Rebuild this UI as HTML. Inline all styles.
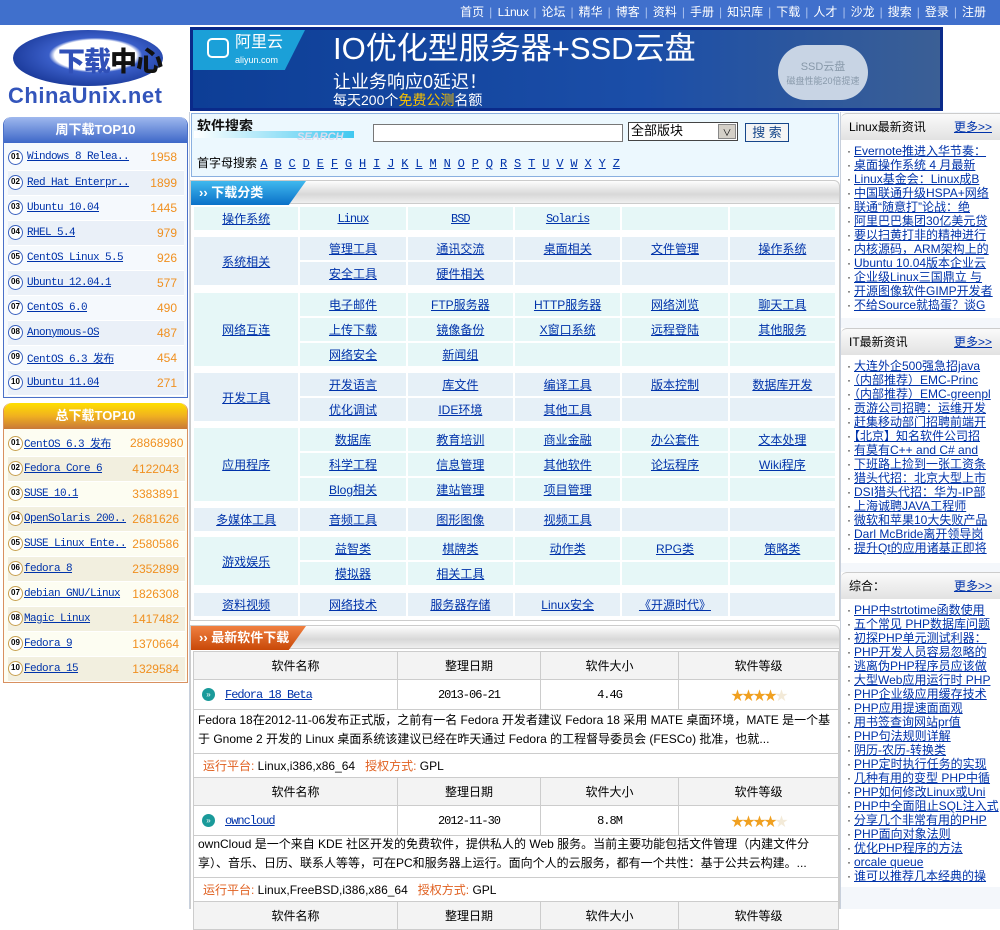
<!DOCTYPE html>
<html><head><meta charset="utf-8">
<style>
*{margin:0;padding:0;box-sizing:border-box}
body{width:1000px;height:909px;overflow:hidden;background:#fff;font:12px "Liberation Sans","Noto Sans CJK SC",sans-serif;color:#000;position:relative}
a{color:#0033aa;text-decoration:underline}
.abs{position:absolute}
#nav{left:0;top:0;width:1000px;height:25px;background:#4070cc;color:#fff;text-align:right;padding-right:10px;line-height:24px;font-size:12px}
#nav span{color:#fff;margin:0 4px}
#nav i{font-style:normal;color:#a8c0ee;margin:0 1px}
.mono{font-family:"Liberation Mono","Noto Sans CJK SC",monospace;letter-spacing:-1px}
.ptitle{color:#fff;font-weight:bold;text-align:center;font-size:13px;line-height:26px;border-radius:8px 8px 0 0}
.lt{table-layout:fixed;font-family:"Liberation Mono","Noto Sans CJK SC",monospace;font-size:11px;letter-spacing:-0.6px}
.lt td{height:25px;border-bottom:1px solid #fff;white-space:nowrap;overflow:hidden}
.lt td.n{font-family:"Liberation Sans",sans-serif;font-size:12px;letter-spacing:0}
.num{display:inline-block;width:15px;height:15px;border:1.5px solid #3a62c0;border-radius:50%;font-size:8px;line-height:12px;text-align:center;font-weight:bold;color:#000;background:#fff;font-family:"Liberation Sans",sans-serif;letter-spacing:0}
.cat{position:absolute;left:192px;width:645px;border-collapse:separate;border-spacing:2px;background:#fff}
.cat td{text-align:center;height:23px;width:105px}
.cat td.l{width:104px}
.c1 td{background:#e6f7f7}
.c2 td{background:#e6f0f7}
.rp{position:absolute;left:841px;width:159px}
.rh{height:27px;background:linear-gradient(#fafafa,#e2e2e2);border-top:1px solid #ccc;border-radius:6px 0 0 0;line-height:27px;padding-left:8px;font-size:12px}
.rh a{position:absolute;right:8px;font-size:12px}
.rl{padding:4px 0 0 6px;line-height:14px;font-size:12px;white-space:nowrap;overflow:hidden}
.rl div:before{content:"·";color:#000;margin-right:3px}
.sec{height:24px;background:linear-gradient(#fdfdfd,#d8d8d8 60%,#efefef);border:1px solid #ccc;border-radius:0 6px 0 0;position:absolute;left:190px;width:650px}
.sech{position:absolute;left:0;top:0;height:24px;width:115px;color:#fff;font-weight:bold;font-size:13px;line-height:23px;padding-left:8px;clip-path:polygon(0 0,100% 0,85% 100%,0 100%)}
.st{position:absolute;left:193px;width:646px;border-collapse:collapse}
.st td{border:1px solid #ccc;text-align:center;font-size:12px}
.st tr.h td{background:#f3f3f3;height:28px}
.desc{position:absolute;left:193px;width:646px;padding:2px 4px;line-height:19px;font-size:12px;border-left:1px solid #ccc;border-right:1px solid #ccc}
.plat{position:absolute;left:193px;width:646px;height:25px;line-height:24px;padding-left:9px;border:1px solid #ccc;font-size:12px}
.plat b{color:#e06020;font-weight:normal}
.let a{display:inline-block;width:14.1px;font-family:"Liberation Mono",monospace;font-size:12px}
</style></head><body>

<div id="nav" class="abs"><span>首页</span><i>|</i><span class="mono">Linux</span><i>|</i><span>论坛</span><i>|</i><span>精华</span><i>|</i><span>博客</span><i>|</i><span>资料</span><i>|</i><span>手册</span><i>|</i><span>知识库</span><i>|</i><span>下载</span><i>|</i><span>人才</span><i>|</i><span>沙龙</span><i>|</i><span>搜索</span><i>|</i><span>登录</span><i>|</i><span>注册</span></div>

<!-- logo -->
<div class="abs" style="left:8px;top:30px;width:172px;height:78px">
 <div class="abs" style="left:5px;top:0;width:150px;height:56px;border-radius:50%;background:radial-gradient(ellipse at 55% 45%,#fff 35%,#3a5ec8 40%,#1b3a9a 75%)"></div>
 <div class="abs" style="left:50px;top:10px;font-size:27px;font-weight:900;letter-spacing:-1px"><span style="color:#3050b8">下载</span><span style="color:#111">中心</span></div>
 <div class="abs" style="left:0;top:53px;font-size:22px;font-weight:900;color:#3355bb;font-family:'Liberation Sans',sans-serif;letter-spacing:0.5px">ChinaUnix.net</div>
</div>

<!-- banner -->
<div class="abs" style="left:190px;top:27px;width:753px;height:84px;background:#0a2a8a;padding:3px">
 <div style="position:relative;width:100%;height:100%;background:linear-gradient(90deg,#0d3e96,#1b4ea8 60%,#3b5f95)">
  <div class="abs" style="left:0;top:0;width:112px;height:40px;background:#1ba0d8;clip-path:polygon(0 0,100% 0,82% 100%,0 100%)"></div>
  <div class="abs" style="left:14px;top:8px;width:22px;height:20px;border:2px solid #fff;border-radius:5px"></div>
  <div class="abs" style="left:42px;top:5px;color:#fff;font-size:16px;line-height:16px">阿里云<br><span style="font-size:9px">aliyun.com</span></div>
  <div class="abs" style="left:140px;top:0;color:#fff;font-size:31px;line-height:38px">IO优化型服务器+SSD云盘</div>
  <div class="abs" style="left:140px;top:38px;color:#fff;font-size:18px">让业务响应0延迟！</div>
  <div class="abs" style="left:140px;top:60px;color:#fff;font-size:14px">每天200个<span style="color:#f5c000">免费公测</span>名额</div>
  <div class="abs" style="left:585px;top:15px;width:90px;height:55px;border-radius:30px;background:#c8d4e4;color:#8899aa;text-align:center;font-size:11px;line-height:14px;padding-top:15px">SSD云盘<br><span style="font-size:9px">磁盘性能20倍提速</span></div>
 </div>
</div>

<!-- weekly top10 -->
<div class="abs" style="left:3px;top:117px;width:185px;height:281px;border:1px solid #4a70c8;border-top:none;border-radius:8px 8px 0 0;background:#f5f9fd">
 <div class="ptitle" style="background:linear-gradient(#9fb8ee,#3d67c8)">周下载TOP10</div>
 <table class="lt" style="margin:2px 0 0 4px;border-collapse:collapse;width:176px">
 <col style="width:19px"><col style="width:112px"><col>
 <tr><td><span class="num">01</span></td><td><a>Windows 8 Relea..</a></td><td class="n" style="color:#f09020;text-align:right;padding-right:7px">1958</td></tr>
 <tr style="background:#eaf0f8"><td><span class="num">02</span></td><td><a>Red Hat Enterpr..</a></td><td class="n" style="color:#f09020;text-align:right;padding-right:7px">1899</td></tr>
 <tr><td><span class="num">03</span></td><td><a>Ubuntu 10.04</a></td><td class="n" style="color:#f09020;text-align:right;padding-right:7px">1445</td></tr>
 <tr style="background:#eaf0f8"><td><span class="num">04</span></td><td><a>RHEL 5.4</a></td><td class="n" style="color:#f09020;text-align:right;padding-right:7px">979</td></tr>
 <tr><td><span class="num">05</span></td><td><a>CentOS Linux 5.5</a></td><td class="n" style="color:#f09020;text-align:right;padding-right:7px">926</td></tr>
 <tr style="background:#eaf0f8"><td><span class="num">06</span></td><td><a>Ubuntu 12.04.1</a></td><td class="n" style="color:#f09020;text-align:right;padding-right:7px">577</td></tr>
 <tr><td><span class="num">07</span></td><td><a>CentOS 6.0</a></td><td class="n" style="color:#f09020;text-align:right;padding-right:7px">490</td></tr>
 <tr style="background:#eaf0f8"><td><span class="num">08</span></td><td><a>Anonymous-OS</a></td><td class="n" style="color:#f09020;text-align:right;padding-right:7px">487</td></tr>
 <tr><td><span class="num">09</span></td><td><a>CentOS 6.3 发布</a></td><td class="n" style="color:#f09020;text-align:right;padding-right:7px">454</td></tr>
 <tr style="background:#eaf0f8"><td><span class="num">10</span></td><td><a>Ubuntu 11.04</a></td><td class="n" style="color:#f09020;text-align:right;padding-right:7px">271</td></tr>
 </table>
</div>

<!-- total top10 -->
<div class="abs" style="left:3px;top:403px;width:185px;height:280px;border:1px solid #d89060;border-top:none;border-radius:8px 8px 0 0;background:#fdfdf2">
 <div class="ptitle" style="background:linear-gradient(#ffe000,#f0b020 50%,#c87838)">总下载TOP10</div>
 <table class="lt" style="margin:2px 0 0 4px;border-collapse:collapse;width:177px">
 <col style="width:16px"><col style="width:106px"><col>
 <tr><td><span class="num" style="border-color:#c8a050">01</span></td><td><a>CentOS 6.3 发布</a></td><td class="n" style="color:#f09020;text-align:right;padding-right:6px">28868980</td></tr>
 <tr style="background:#f2efdf"><td><span class="num" style="border-color:#c8a050">02</span></td><td><a>Fedora Core 6</a></td><td class="n" style="color:#f09020;text-align:right;padding-right:6px">4122043</td></tr>
 <tr><td><span class="num" style="border-color:#c8a050">03</span></td><td><a>SUSE 10.1</a></td><td class="n" style="color:#f09020;text-align:right;padding-right:6px">3383891</td></tr>
 <tr style="background:#f2efdf"><td><span class="num" style="border-color:#c8a050">04</span></td><td><a>OpenSolaris 200..</a></td><td class="n" style="color:#f09020;text-align:right;padding-right:6px">2681626</td></tr>
 <tr><td><span class="num" style="border-color:#c8a050">05</span></td><td><a>SUSE Linux Ente..</a></td><td class="n" style="color:#f09020;text-align:right;padding-right:6px">2580586</td></tr>
 <tr style="background:#f2efdf"><td><span class="num" style="border-color:#c8a050">06</span></td><td><a>fedora 8</a></td><td class="n" style="color:#f09020;text-align:right;padding-right:6px">2352899</td></tr>
 <tr><td><span class="num" style="border-color:#c8a050">07</span></td><td><a>debian GNU/Linux</a></td><td class="n" style="color:#f09020;text-align:right;padding-right:6px">1826308</td></tr>
 <tr style="background:#f2efdf"><td><span class="num" style="border-color:#c8a050">08</span></td><td><a>Magic Linux</a></td><td class="n" style="color:#f09020;text-align:right;padding-right:6px">1417482</td></tr>
 <tr><td><span class="num" style="border-color:#c8a050">09</span></td><td><a>Fedora 9</a></td><td class="n" style="color:#f09020;text-align:right;padding-right:6px">1370664</td></tr>
 <tr style="background:#f2efdf"><td><span class="num" style="border-color:#c8a050">10</span></td><td><a>Fedora 15</a></td><td class="n" style="color:#f09020;text-align:right;padding-right:6px">1329584</td></tr>
 </table>
</div>

<div class="abs" style="left:189px;top:112px;width:1px;height:797px;background:#c8d0dc"></div>

<!-- search -->
<div class="abs" style="left:191px;top:113px;width:648px;height:64px;background:#ecf8fe;border:1px solid #8ab0e0">
 <div class="abs" style="left:5px;top:2px;font-size:14px;font-weight:bold;color:#111">软件搜索</div>
 <div class="abs" style="left:2px;top:17px;width:160px;height:7px;background:linear-gradient(90deg,#fff,#40c8f0)"></div>
 <div class="abs" style="left:105px;top:17px;font-size:11px;font-style:italic;font-weight:bold;color:#dde;">SEARCH</div>
 <div class="abs" style="left:181px;top:10px;width:250px;height:18px;border:1px solid #777;background:#fff"></div>
 <div class="abs" style="left:436px;top:8px;width:110px;height:19px;border:1px solid #444;background:#fff;font-size:13px;line-height:16px;padding-left:2px">全部版块<span style="position:absolute;right:1px;top:1px;width:18px;height:15px;background:#d4d0c8;border:1px solid #888;font-size:9px;text-align:center">∨</span></div>
 <div class="abs" style="left:553px;top:9px;width:44px;height:19px;border:1px solid #16468a;background:#f4f4f4;color:#16468a;font-size:13px;text-align:center;line-height:17px">搜 索</div>
 <div class="abs let" style="left:5px;top:40px;font-size:12px;white-space:nowrap">首字母搜索 <a>A</a><a>B</a><a>C</a><a>D</a><a>E</a><a>F</a><a>G</a><a>H</a><a>I</a><a>J</a><a>K</a><a>L</a><a>M</a><a>N</a><a>O</a><a>P</a><a>Q</a><a>R</a><a>S</a><a>T</a><a>U</a><a>V</a><a>W</a><a>X</a><a>Y</a><a>Z</a></div>
</div>

<!-- category -->
<div class="sec" style="top:180px"><div class="sech" style="background:linear-gradient(#40b8ee,#0a70c8)">›› 下载分类</div></div>
<div class="abs" style="left:190px;top:204px;width:650px;height:417px;border:1px solid #ccc;border-top:none"></div>

<table class="cat c1" style="top:205px"><tr><td class="l"><a>操作系统</a></td><td><a class="mono">Linux</a></td><td><a class="mono">BSD</a></td><td><a class="mono">Solaris</a></td><td></td><td></td></tr></table>
<table class="cat c2" style="top:235px"><tr><td class="l" rowspan="2"><a>系统相关</a></td><td><a>管理工具</a></td><td><a>通讯交流</a></td><td><a>桌面相关</a></td><td><a>文件管理</a></td><td><a>操作系统</a></td></tr><tr><td><a>安全工具</a></td><td><a>硬件相关</a></td><td></td><td></td><td></td></tr></table>
<table class="cat c1" style="top:291px"><tr><td class="l" rowspan="3"><a>网络互连</a></td><td><a>电子邮件</a></td><td><a>FTP服务器</a></td><td><a>HTTP服务器</a></td><td><a>网络浏览</a></td><td><a>聊天工具</a></td></tr><tr><td><a>上传下载</a></td><td><a>镜像备份</a></td><td><a>X窗口系统</a></td><td><a>远程登陆</a></td><td><a>其他服务</a></td></tr><tr><td><a>网络安全</a></td><td><a>新闻组</a></td><td></td><td></td><td></td></tr></table>
<table class="cat c2" style="top:371px"><tr><td class="l" rowspan="2"><a>开发工具</a></td><td><a>开发语言</a></td><td><a>库文件</a></td><td><a>编译工具</a></td><td><a>版本控制</a></td><td><a>数据库开发</a></td></tr><tr><td><a>优化调试</a></td><td><a>IDE环境</a></td><td><a>其他工具</a></td><td></td><td></td></tr></table>
<table class="cat c1" style="top:426px"><tr><td class="l" rowspan="3"><a>应用程序</a></td><td><a>数据库</a></td><td><a>教育培训</a></td><td><a>商业金融</a></td><td><a>办公套件</a></td><td><a>文本处理</a></td></tr><tr><td><a>科学工程</a></td><td><a>信息管理</a></td><td><a>其他软件</a></td><td><a>论坛程序</a></td><td><a>Wiki程序</a></td></tr><tr><td><a>Blog相关</a></td><td><a>建站管理</a></td><td><a>项目管理</a></td><td></td><td></td></tr></table>
<table class="cat c2" style="top:506px"><tr><td class="l"><a>多媒体工具</a></td><td><a>音频工具</a></td><td><a>图形图像</a></td><td><a>视频工具</a></td><td></td><td></td></tr></table>
<table class="cat c1" style="top:535px"><tr><td class="l" rowspan="2"><a>游戏娱乐</a></td><td><a>益智类</a></td><td><a>棋牌类</a></td><td><a>动作类</a></td><td><a>RPG类</a></td><td><a>策略类</a></td></tr><tr><td><a>模拟器</a></td><td><a>相关工具</a></td><td></td><td></td><td></td></tr></table>
<table class="cat c2" style="top:591px"><tr><td class="l"><a>资料视频</a></td><td><a>网络技术</a></td><td><a>服务器存储</a></td><td><a>Linux安全</a></td><td><a>《开源时代》</a></td><td></td></tr></table>

<!-- latest -->
<div class="sec" style="top:625px"><div class="sech" style="background:linear-gradient(#f08040,#c84808)">›› 最新软件下载</div></div>
<div class="abs" style="left:190px;top:649px;width:650px;height:260px;border-left:1px solid #ccc;border-right:1px solid #ccc"></div>

<table class="st" style="top:651px">
<tr class="h"><td style="width:204px">软件名称</td><td style="width:143px">整理日期</td><td style="width:138px">软件大小</td><td>软件等级</td></tr>
<tr><td style="height:30px;text-align:left;padding-left:8px"><span style="display:inline-block;width:13px;height:13px;border-radius:50%;background:#1a9a9a;color:#fff;font-size:8px;line-height:13px;text-align:center;vertical-align:middle;margin-right:10px">»</span><a class="mono">Fedora 18 Beta</a></td><td class="mono">2013-06-21</td><td class="mono">4.4G</td><td style="color:#f0a020;font-size:13px;letter-spacing:-2px">★★★★<span style="color:#f3ead8">★</span></td></tr>
</table>
<div class="desc" style="top:709px;height:45px">Fedora 18在2012-11-06发布正式版，之前有一名 Fedora 开发者建议 Fedora 18 采用 MATE 桌面环境，MATE 是一个基于 Gnome 2 开发的 Linux 桌面系统该建议已经在昨天通过 Fedora 的工程督导委员会 (FESCo) 批准，也就...</div>
<div class="plat" style="top:753px"><b>运行平台:</b> Linux,i386,x86_64 &nbsp; <b>授权方式:</b> GPL</div>

<table class="st" style="top:777px">
<tr class="h"><td style="width:204px;height:26px">软件名称</td><td style="width:143px">整理日期</td><td style="width:138px">软件大小</td><td>软件等级</td></tr>
<tr><td style="height:30px;text-align:left;padding-left:8px"><span style="display:inline-block;width:13px;height:13px;border-radius:50%;background:#1a9a9a;color:#fff;font-size:8px;line-height:13px;text-align:center;vertical-align:middle;margin-right:10px">»</span><a class="mono">owncloud</a></td><td class="mono">2012-11-30</td><td class="mono">8.8M</td><td style="color:#f0a020;font-size:13px;letter-spacing:-2px">★★★★<span style="color:#f3ead8">★</span></td></tr>
</table>
<div class="desc" style="top:833px;height:45px">ownCloud 是一个来自 KDE 社区开发的免费软件，提供私人的 Web 服务。当前主要功能包括文件管理（内建文件分享）、音乐、日历、联系人等等，可在PC和服务器上运行。面向个人的云服务，都有一个共性：基于公共云构建。...</div>
<div class="plat" style="top:877px"><b>运行平台:</b> Linux,FreeBSD,i386,x86_64 &nbsp; <b>授权方式:</b> GPL</div>
<table class="st" style="top:901px"><tr class="h"><td style="width:204px">软件名称</td><td style="width:143px">整理日期</td><td style="width:138px">软件大小</td><td>软件等级</td></tr></table>

<!-- right column -->
<div class="abs" style="left:840px;top:112px;width:160px;height:797px;background:#f4f7fb;border-left:1px solid #c8d0dc"></div>
<div class="rp" style="top:113px;height:205px;background:#fff">
 <div class="rh" style="position:relative">Linux最新资讯<a>更多&gt;&gt;</a></div>
 <div class="rl">
 <div><a>Evernote推进入华节奏：</a></div><div><a>桌面操作系统 4 月最新</a></div><div><a>Linux基金会：Linux成B</a></div><div><a>中国联通升级HSPA+网络</a></div><div><a>联通“随意打”论战：绝</a></div><div><a>阿里巴巴集团30亿美元贷</a></div><div><a>要以扫黄打非的精神进行</a></div><div><a>内核源码，ARM架构上的</a></div><div><a>Ubuntu 10.04版本企业云</a></div><div><a>企业级Linux三国鼎立 与</a></div><div><a>开源图像软件GIMP开发者</a></div><div><a>不给Source就捣蛋？谈G</a></div>
 </div>
</div>
<div class="rp" style="top:328px;height:235px;background:#fff">
 <div class="rh" style="position:relative">IT最新资讯<a>更多&gt;&gt;</a></div>
 <div class="rl">
 <div><a>大连外企500强急招java</a></div><div><a>（内部推荐）EMC-Princ</a></div><div><a>（内部推荐）EMC-greenpl</a></div><div><a>贡游公司招聘：运维开发</a></div><div><a>赶集移动部门招聘前端开</a></div><div><a>【北京】知名软件公司招</a></div><div><a>有莫有C++ and C# and</a></div><div><a>下班路上捡到一张工资条</a></div><div><a>猎头代招：北京大型上市</a></div><div><a>DSI猎头代招：华为-IP部</a></div><div><a>上海诚聘JAVA工程师</a></div><div><a>微软和苹果10大失败产品</a></div><div><a>Darl McBride离开领导岗</a></div><div><a>提升Qt的应用诸基正即将</a></div>
 </div>
</div>
<div class="rp" style="top:572px;height:315px;background:#fff">
 <div class="rh" style="position:relative">综合：<a>更多&gt;&gt;</a></div>
 <div class="rl">
 <div><a>PHP中strtotime函数使用</a></div><div><a>五个常见 PHP数据库问题</a></div><div><a>初探PHP单元测试利器：</a></div><div><a>PHP开发人员容易忽略的</a></div><div><a>逃离伪PHP程序员应该做</a></div><div><a>大型Web应用运行时 PHP</a></div><div><a>PHP企业级应用缓存技术</a></div><div><a>PHP应用提速面面观</a></div><div><a>用书签查询网站pr值</a></div><div><a>PHP句法规则详解</a></div><div><a>阴历-农历-转换类</a></div><div><a>PHP定时执行任务的实现</a></div><div><a>几种有用的变型 PHP中循</a></div><div><a>PHP如何修改Linux或Uni</a></div><div><a>PHP中全面阻止SQL注入式</a></div><div><a>分享几个非常有用的PHP</a></div><div><a>PHP面向对象法则</a></div><div><a>优化PHP程序的方法</a></div><div><a>orcale queue</a></div><div><a>谁可以推荐几本经典的操</a></div>
 </div>
</div>
</body></html>
